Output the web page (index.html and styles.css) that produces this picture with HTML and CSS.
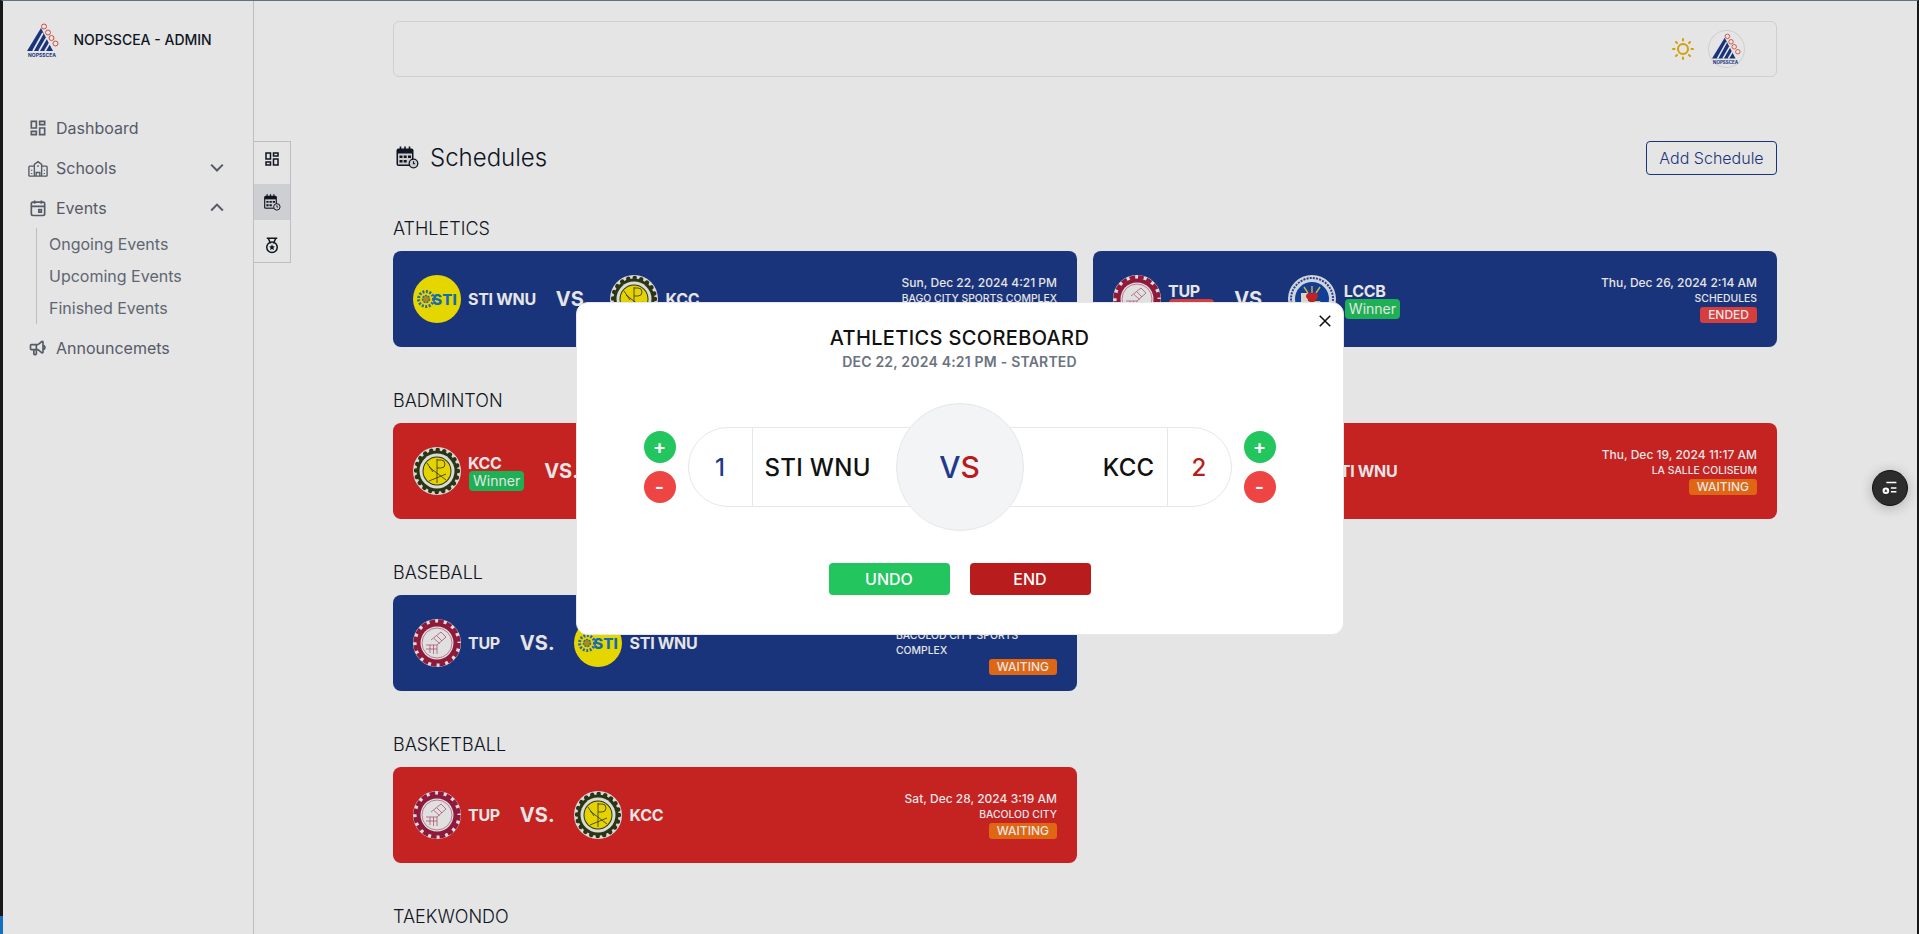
FILE: index.html
```html
<!DOCTYPE html>
<html lang="en">

<head>
    <meta charset="UTF-8">
    <meta name="viewport" content="width=device-width, initial-scale=1.0">
    <title>NOPSSCEA - Admin Schedules</title>
    <link rel="stylesheet" href="styles.css">
</head>

<body>
    <svg class="svg-defs" aria-hidden="true">
        <symbol id="mark-nopsscea" viewBox="0 0 32 36">
            <polygon points="0,28 14,5 26,28" fill="#1e3a8a" />
            <path d="M6 28 L16 10 M12 28 L19.5 15 M18 28 L23 19.5" stroke="#fff" stroke-width="1.7" fill="none" />
            <g fill="#fff" stroke="#e2574c" stroke-width="1">
                <circle cx="17" cy="3.5" r="2.5" />
                <circle cx="21" cy="9.5" r="2.5" />
                <circle cx="24.5" cy="15" r="2.5" />
                <circle cx="28.5" cy="20.5" r="2.5" />
            </g>
        </symbol>

        <symbol id="mark-sti" viewBox="0 0 48 48">
            <circle cx="24" cy="24" r="24" fill="#ffef00" />
            <circle cx="13" cy="24" r="7.5" fill="none" stroke="#2f77b5" stroke-width="3" stroke-dasharray="2 1.5" />
            <circle cx="13" cy="24" r="3.5" fill="#c99a1a" stroke="#2f77b5" stroke-width="1.5" stroke-dasharray="2 1" />
        </symbol>

        <symbol id="logo-kcc" viewBox="0 0 48 48">
            <circle cx="24" cy="24" r="24" fill="#f2f2f2" />
            <circle cx="24" cy="24" r="20.5" fill="#2f3c16" />
            <circle cx="24" cy="24" r="21" fill="none" stroke="#2f3c16" stroke-width="4.4" stroke-linecap="round" stroke-dasharray=".1 6.5" />
            <circle cx="24" cy="24" r="17.5" fill="#f4f4ee" />
            <circle cx="24" cy="24" r="14.5" fill="#2f3c16" />
            <circle cx="24" cy="24" r="13.5" fill="#ffeb00" />
            <path d="M24 12 V36 M24 13 h4 a4 4 0 0 1 0 8 h-4 M16 20 L33 33 M33 27 L16 34 M14 16 L20 25" stroke="#333" stroke-width=".8" fill="none" />
        </symbol>

        <symbol id="logo-tup" viewBox="0 0 48 48">
            <circle cx="24" cy="24" r="24" fill="#f5f5f5" />
            <circle cx="24" cy="24" r="20.5" fill="#a01c42" />
            <circle cx="24" cy="24" r="21.8" fill="none" stroke="#a01c42" stroke-width="3.8" stroke-dasharray="5.6 3" />
            <circle cx="24" cy="24" r="16.5" fill="#fafafa" />
            <circle cx="24" cy="24" r="15" fill="none" stroke="#a01c42" stroke-width=".5" />
            <path d="M13 26 h11 v9 M17 26 v8 M20.5 26 v9 M13 30 h11 M24 26 L33 18 L28 13 L18 21 M24 17 L29 22 M21 19.5 L26.5 24.5" stroke="#b8496a" stroke-width=".7" fill="none" />
        </symbol>

        <symbol id="logo-lccb" viewBox="0 0 48 48">
            <circle cx="24" cy="24" r="24" fill="#e8edf6" />
            <circle cx="24" cy="24" r="21" fill="none" stroke="#2a4a9c" stroke-width="2" stroke-dasharray="2 1.2" />
            <circle cx="24" cy="24" r="17" fill="#1546a8" />
            <path d="M12 33 h24 l-4 -7 h-16 z" fill="#f0d98a" />
            <rect x="13" y="18" width="7" height="9" fill="#f3f0e0" />
            <path d="M24 30 L18 22 a3.5 3.5 0 0 1 6 -3 a3.5 3.5 0 0 1 6 3 z" fill="#d9262a" />
            <path d="M24 18 V11 M20 18 L16 12 M28 18 L32 12" stroke="#f4c430" stroke-width="1.4" />
        </symbol>

        <symbol id="icon-calendar-clock" viewBox="0 0 24 24">
            <rect x="1.5" y="3.5" width="17" height="17.5" rx="2" fill="currentColor" />
            <path d="M5.5 1.5 v4 M10 1.5 v4 M14.5 1.5 v4" stroke="currentColor" stroke-width="1.6" />
            <rect x="3" y="8.5" width="14" height="11" fill="#e5e5e5" />
            <path d="M4.5 10.5 h3 v2.5 h-3 z M8.7 10.5 h3 v2.5 h-3 z M13 10.5 h3 v2.5 h-3 z M4.5 15 h3 v2.5 h-3 z M8.7 15 h3 v2.5 h-3 z" fill="currentColor" />
            <circle cx="18.5" cy="18.5" r="4.3" fill="#e5e5e5" stroke="currentColor" stroke-width="1.3" />
            <path d="M18.5 16.2 v2.6 h1.6" stroke="currentColor" stroke-width="1.1" fill="none" />
        </symbol>

        <symbol id="icon-dashboard" viewBox="0 0 24 24">
            <path d="M4 4h6v8H4z M4 16h6v4H4z M14 12h6v8h-6z M14 4h6v4h-6z" fill="none" stroke="currentColor" stroke-width="2" />
        </symbol>
    </svg>

    <div class="frame">
        <aside class="sidebar">
            <div class="brand">
                <svg class="brand-logo" viewBox="0 0 32 36">
                    <use href="#mark-nopsscea" width="32" height="36" />
                    <text class="logo-caption" x="15" y="34" text-anchor="middle">NOPSSCEA</text>
                </svg>
                <span class="brand-name">NOPSSCEA - ADMIN</span>
            </div>

            <nav class="nav">
                <a class="nav-item">
                    <svg class="nav-icon"><use href="#icon-dashboard" /></svg>
                    <span>Dashboard</span>
                </a>
                <a class="nav-item">
                    <svg class="nav-icon" viewBox="1 1 22 22" fill="none" stroke="currentColor" stroke-width="1.5">
                        <path d="M2 21 V11 a1 1 0 0 1 1-1 h5 M22 21 V11 a1 1 0 0 0-1-1 h-5 M8 21 V8 l4-3 4 3 v13 M2 21 h20 M10 21 v-4 h4 v4 M12 9 v2 M5 14 v1 M5 17.5 v1 M19 14 v1 M19 17.5 v1" />
                    </svg>
                    <span>Schools</span>
                    <svg class="nav-chevron" viewBox="0 0 24 24" fill="none" stroke="currentColor" stroke-width="2.4"><path d="M5 8 l7 7 7-7" /></svg>
                </a>
                <a class="nav-item">
                    <svg class="nav-icon" viewBox="0 0 24 24" fill="none" stroke="currentColor" stroke-width="2">
                        <path d="M6 5h12a2 2 0 0 1 2 2v12a2 2 0 0 1-2 2H6a2 2 0 0 1-2-2V7a2 2 0 0 1 2-2 M16 3v4 M8 3v4 M4 10h16" />
                        <rect x="13" y="14" width="3" height="3" />
                    </svg>
                    <span>Events</span>
                    <svg class="nav-chevron" viewBox="0 0 24 24" fill="none" stroke="currentColor" stroke-width="2.4"><path d="M5 15 l7-7 7 7" /></svg>
                </a>
                <div class="subnav">
                    <a class="subnav-item">Ongoing Events</a>
                    <a class="subnav-item">Upcoming Events</a>
                    <a class="subnav-item">Finished Events</a>
                </div>
                <a class="nav-item">
                    <svg class="nav-icon" viewBox="0 0 24 24" fill="none" stroke="currentColor" stroke-width="2">
                        <path d="M19 9a3 3 0 0 1 0 5 M10 8v11a1 1 0 0 1-1 1H8a1 1 0 0 1-1-1v-5 M12 8l4.6-3.8A1 1 0 0 1 18 5v12a1 1 0 0 1-1.4.8L12 14H4a1 1 0 0 1-1-1V9a1 1 0 0 1 1-1h8" />
                    </svg>
                    <span>Announcemets</span>
                </a>
            </nav>
        </aside>

        <div class="rail">
            <a class="rail-item"><svg class="rail-icon"><use href="#icon-dashboard" /></svg></a>
            <a class="rail-item rail-active"><svg class="rail-icon"><use href="#icon-calendar-clock" /></svg></a>
            <a class="rail-item">
                <svg class="rail-icon" viewBox="0 0 24 24" fill="none" stroke="currentColor" stroke-width="2">
                    <path d="M5 3 h14 M7 3 l3 7 M17 3 l-3 7" />
                    <circle cx="12" cy="15" r="7" />
                    <path d="M12 11 l1.2 2.6 2.8.3-2.1 1.9.6 2.8-2.5-1.4-2.5 1.4.6-2.8-2.1-1.9 2.8-.3 z" fill="currentColor" stroke="none" />
                </svg>
            </a>
        </div>

        <main class="main">
            <header class="topbar">
                <svg class="sun" viewBox="0 0 24 24" fill="none" stroke="currentColor" stroke-width="2" stroke-linecap="round">
                    <circle cx="12" cy="12" r="5" />
                    <path d="M12 2 v1.5 M12 20.5 V22 M2 12 h1.5 M20.5 12 H22 M5 5 l1 1 M18 18 l1 1 M5 19 l1-1 M18 6 l1-1" />
                </svg>
                <div class="avatar">
                    <svg class="avatar-logo" viewBox="0 0 32 36">
                        <use href="#mark-nopsscea" width="32" height="36" />
                        <text class="logo-caption" x="15" y="34" text-anchor="middle">NOPSSCEA</text>
                    </svg>
                </div>
            </header>

            <div class="page-head">
                <h1 class="page-title">
                    <svg class="page-icon"><use href="#icon-calendar-clock" /></svg>
                    Schedules
                </h1>
                <button class="btn-outline">Add Schedule</button>
            </div>

            <section class="sport">
                <h2 class="sport-name">ATHLETICS</h2>
                <div class="card-grid">
                    <article class="card card-blue">
                        <div class="match">
                            <svg class="team-logo" viewBox="0 0 48 48">
                                <use href="#mark-sti" width="48" height="48" />
                                <text class="sti-text" x="31.5" y="29.5" text-anchor="middle">STI</text>
                            </svg>
                            <div class="team"><span class="team-name">STI WNU</span></div>
                            <span class="versus">VS.</span>
                            <svg class="team-logo"><use href="#logo-kcc" /></svg>
                            <div class="team"><span class="team-name">KCC</span></div>
                        </div>
                        <div class="info">
                            <span class="info-date">Sun, Dec 22, 2024 4:21 PM</span>
                            <span class="info-venue">BAGO CITY SPORTS COMPLEX</span>
                            <span class="status status-ongoing">ONGOING</span>
                        </div>
                    </article>
                    <article class="card card-blue">
                        <div class="match">
                            <svg class="team-logo"><use href="#logo-tup" /></svg>
                            <div class="team">
                                <span class="team-name">TUP</span>
                                <span class="result result-loser">Loser</span>
                            </div>
                            <span class="versus">VS.</span>
                            <svg class="team-logo"><use href="#logo-lccb" /></svg>
                            <div class="team">
                                <span class="team-name">LCCB</span>
                                <span class="result result-winner">Winner</span>
                            </div>
                        </div>
                        <div class="info">
                            <span class="info-date">Thu, Dec 26, 2024 2:14 AM</span>
                            <span class="info-venue">SCHEDULES</span>
                            <span class="status status-ended">ENDED</span>
                        </div>
                    </article>
                </div>
            </section>

            <section class="sport">
                <h2 class="sport-name">BADMINTON</h2>
                <div class="card-grid">
                    <article class="card card-red">
                        <div class="match">
                            <svg class="team-logo"><use href="#logo-kcc" /></svg>
                            <div class="team">
                                <span class="team-name">KCC</span>
                                <span class="result result-winner">Winner</span>
                            </div>
                            <span class="versus">VS.</span>
                        </div>
                    </article>
                    <article class="card card-red">
                        <div class="match">
                            <svg class="team-logo"><use href="#logo-tup" /></svg>
                            <div class="team"><span class="team-name">TUP</span></div>
                            <span class="versus">VS.</span>
                            <svg class="team-logo" viewBox="0 0 48 48">
                                <use href="#mark-sti" width="48" height="48" />
                            </svg>
                            <div class="team"><span class="team-name">STI WNU</span></div>
                        </div>
                        <div class="info">
                            <span class="info-date">Thu, Dec 19, 2024 11:17 AM</span>
                            <span class="info-venue">LA SALLE COLISEUM</span>
                            <span class="status status-waiting">WAITING</span>
                        </div>
                    </article>
                </div>
            </section>

            <section class="sport">
                <h2 class="sport-name">BASEBALL</h2>
                <div class="card-grid">
                    <article class="card card-blue">
                        <div class="match">
                            <svg class="team-logo"><use href="#logo-tup" /></svg>
                            <div class="team"><span class="team-name">TUP</span></div>
                            <span class="versus">VS.</span>
                            <svg class="team-logo" viewBox="0 0 48 48">
                                <use href="#mark-sti" width="48" height="48" />
                                <text class="sti-text" x="31.5" y="29.5" text-anchor="middle">STI</text>
                            </svg>
                            <div class="team"><span class="team-name">STI WNU</span></div>
                        </div>
                        <div class="info info-narrow">
                            <span class="info-date">Sat, Dec 21, 2024 9:00 AM</span>
                            <span class="info-venue">BACOLOD CITY SPORTS COMPLEX</span>
                            <span class="status status-waiting">WAITING</span>
                        </div>
                    </article>
                </div>
            </section>

            <section class="sport">
                <h2 class="sport-name">BASKETBALL</h2>
                <div class="card-grid">
                    <article class="card card-red">
                        <div class="match">
                            <svg class="team-logo"><use href="#logo-tup" /></svg>
                            <div class="team"><span class="team-name">TUP</span></div>
                            <span class="versus">VS.</span>
                            <svg class="team-logo"><use href="#logo-kcc" /></svg>
                            <div class="team"><span class="team-name">KCC</span></div>
                        </div>
                        <div class="info">
                            <span class="info-date">Sat, Dec 28, 2024 3:19 AM</span>
                            <span class="info-venue">BACOLOD CITY</span>
                            <span class="status status-waiting">WAITING</span>
                        </div>
                    </article>
                </div>
            </section>

            <section class="sport">
                <h2 class="sport-name">TAEKWONDO</h2>
            </section>
        </main>
    </div>

    <div class="overlay">
        <div class="modal">
            <button class="modal-close" aria-label="Close">
                <svg viewBox="0 0 16 16" fill="none" stroke="currentColor" stroke-width="1.8"><path d="M2 2 L14 14 M14 2 L2 14" /></svg>
            </button>
            <h3 class="modal-title">ATHLETICS SCOREBOARD</h3>
            <p class="modal-sub">DEC 22, 2024 4:21 PM - STARTED</p>

            <div class="scoreboard">
                <div class="score-btns">
                    <button class="score-btn score-add">+</button>
                    <button class="score-btn score-sub">-</button>
                </div>
                <div class="pill">
                    <span class="pill-score pill-score-home">1</span>
                    <span class="pill-name">STI WNU</span>
                    <span class="pill-name pill-name-away">KCC</span>
                    <span class="pill-score pill-score-away">2</span>
                    <div class="pill-vs"><span class="vs-v">V</span><span class="vs-s">S</span></div>
                </div>
                <div class="score-btns">
                    <button class="score-btn score-add">+</button>
                    <button class="score-btn score-sub">-</button>
                </div>
            </div>

            <div class="modal-actions">
                <button class="action action-undo">UNDO</button>
                <button class="action action-end">END</button>
            </div>
        </div>
    </div>

    <button class="float-btn" aria-label="Open panel">
        <svg viewBox="0 0 24 24" fill="none" stroke="#fff" stroke-width="1.6">
            <path d="M8 6 h11 M13 12 h6 M13 16 h6" />
            <circle cx="7.5" cy="15" r="3.6" fill="#fff" stroke="none" />
            <path d="M7.5 13.2 l1.7 3 h-3.4 z" fill="#2c2c2c" stroke="none" />
        </svg>
    </button>
    <div class="taskbar-edge"></div>
</body>

</html>
```

FILE: styles.css
```css
* {
    box-sizing: border-box;
}

html,
body {
    height: 100%;
    margin: 0;
    overflow: hidden;
}

body {
    font-family: Inter, "Liberation Sans", sans-serif;
    color: #111827;
    background-color: #fff;
}

h1,
h2,
h3,
p {
    margin: 0;
}

button {
    font-family: inherit;
    cursor: pointer;
}

.svg-defs {
    position: absolute;
    width: 0;
    height: 0;
}

.frame {
    display: flex;
    height: 100%;
    border-top: 1px solid #6c8090;
    border-left: 3px solid #1c1c1c;
    border-right: 2px solid #1c1c1c;
}

/* sidebar */
.sidebar {
    flex: 0 0 251px;
    border-right: 1px solid #d1d5db;
    padding-top: 22px;
}

.brand {
    display: flex;
    align-items: center;
    gap: 14.5px;
    height: 36px;
    padding-left: 24px;
}

.brand-logo {
    width: 32px;
    height: 36px;
}

.logo-caption {
    font-size: 5px;
    font-weight: 700;
    fill: #1e3a8a;
}

.brand-name {
    margin-bottom: 4px;
    font-size: 14px;
    font-weight: 500;
    color: #111827;
}

.nav {
    margin-top: 49px;
    padding: 0 26px 0 25px;
    color: #5f6673;
}

.nav-item {
    display: flex;
    align-items: center;
    gap: 8px;
    height: 40px;
    font-size: 16px;
}

.nav-icon {
    flex: none;
    width: 20px;
    height: 20px;
}

.nav-chevron {
    width: 20px;
    height: 20px;
    margin-left: auto;
}

.subnav {
    margin: 0 0 4px 8px;
    padding-left: 12px;
    border-left: 1px solid #d1d5db;
    color: #6b7280;
}

.subnav-item {
    display: flex;
    align-items: center;
    height: 32px;
    font-size: 16px;
}

/* icon rail */
.rail {
    display: flex;
    flex-direction: column;
    gap: 8px;
    flex: none;
    align-self: flex-start;
    width: 37px;
    margin-top: 140px;
    border: 1px solid #d1d5db;
    border-left: 0;
}

.rail-item {
    display: flex;
    align-items: center;
    justify-content: center;
    height: 34px;
    color: #111827;
}

.rail-active {
    height: 36px;
    background-color: #e5e7eb;
}

.rail-icon {
    width: 18px;
    height: 18px;
}

/* main column */
.main {
    flex: 1;
    min-width: 0;
    padding: 20px 140px 0 102px;
}

.topbar {
    display: flex;
    align-items: center;
    justify-content: flex-end;
    gap: 13px;
    height: 56px;
    padding-right: 31px;
    border: 1px solid #e5e7eb;
    border-radius: 6px;
}

.sun {
    width: 24px;
    height: 24px;
    color: #eab308;
}

.avatar {
    display: flex;
    align-items: center;
    justify-content: center;
    width: 37px;
    height: 38px;
    border: 1px solid #e5e7eb;
    border-radius: 50%;
    background-color: #fff;
}

.avatar-logo {
    width: 29px;
    height: 33px;
}

.page-head {
    display: flex;
    align-items: center;
    justify-content: space-between;
    margin-top: 64px;
    height: 34px;
}

.page-title {
    display: flex;
    align-items: center;
    gap: 11px;
    padding: 0 0 2px 2px;
    font-size: 24px;
    font-weight: 350;
}

.page-icon {
    width: 24px;
    height: 24px;
}

.btn-outline {
    width: 131px;
    height: 34px;
    font-size: 16px;
    font-weight: 350;
    color: #1e3a8a;
    background: transparent;
    border: 1px solid #1e3a8a;
    border-radius: 4px;
}

.sport {
    margin-top: 40px;
}

.sport-name {
    font-size: 18px;
    line-height: 28px;
    font-weight: 350;
    color: #111827;
}

.card-grid {
    display: grid;
    grid-template-columns: 1fr 1fr;
    gap: 16px;
    margin-top: 8px;
}

.card {
    display: flex;
    align-items: center;
    justify-content: space-between;
    height: 96px;
    padding: 0 20px;
    border-radius: 8px;
    color: #fff;
}

.card-blue {
    background-color: #1e3a8a;
}

.card-red {
    background-color: #dc2626;
}

.match {
    display: flex;
    align-items: center;
}

.team-logo {
    flex: none;
    width: 48px;
    height: 48px;
}

.sti-text {
    font-size: 15px;
    font-weight: 800;
    fill: #1479c4;
}

.team {
    display: flex;
    flex-direction: column;
    align-items: flex-start;
    margin-left: 7px;
}

.versus + .team-logo + .team {
    margin-left: 8px;
}

.team:has(.result) {
    padding-top: 4px;
}

.team-name {
    font-size: 16px;
    line-height: 16px;
    font-weight: 700;
    letter-spacing: -0.3px;
}

.result {
    margin-left: 1px;
    padding: 0 4px;
    font-size: 14px;
    line-height: 20px;
    border-radius: 4px;
}

.result-winner {
    background-color: #22c55e;
}

.result-loser {
    background-color: #ef4444;
}

.versus {
    margin: 0 19px 0 20px;
    font-size: 20px;
    font-weight: 700;
}

.info {
    display: flex;
    flex-direction: column;
    align-items: flex-end;
    text-align: right;
}

.info-date {
    font-size: 12px;
    line-height: 16px;
    font-weight: 500;
}

.info-venue {
    font-size: 10.4px;
    line-height: 15px;
    font-weight: 500;
}

.info-narrow {
    width: 161px;
}

.info-narrow .info-venue {
    width: 100%;
    padding-right: 30px;
    text-align: left;
}

.status {
    margin-top: 1px;
    padding: 0 8px;
    font-size: 12px;
    line-height: 16px;
    font-weight: 500;
    border-radius: 3px;
}

.status-waiting {
    background-color: #f97316;
}

.status-ended {
    background-color: #ef4444;
}

.status-ongoing {
    background-color: #22c55e;
}

/* scoreboard dialog */
.overlay {
    position: fixed;
    inset: 0;
    z-index: 10;
    display: flex;
    align-items: center;
    justify-content: center;
    padding-top: 3px;
    background-color: rgba(0, 0, 0, 0.1);
}

.modal {
    position: relative;
    width: 768px;
    padding: 21px 0 39px;
    text-align: center;
    color: #111;
    background-color: #fff;
    border: 1px solid #e5e7eb;
    border-radius: 12px;
}

.modal-close {
    position: absolute;
    top: 11px;
    right: 11px;
    width: 14px;
    height: 14px;
    padding: 0;
    color: #111;
    background: none;
    border: 0;
}

.modal-title {
    font-size: 20px;
    line-height: 28px;
    font-weight: 500;
    letter-spacing: 0.35px;
}

.modal-sub {
    font-size: 14px;
    line-height: 20px;
    font-weight: 600;
    letter-spacing: 0.2px;
    color: #6b7280;
}

.scoreboard {
    display: flex;
    align-items: center;
    justify-content: center;
    gap: 12px;
    margin-top: 55px;
}

.score-btns {
    display: flex;
    flex-direction: column;
    gap: 8px;
}

.score-btn {
    width: 32px;
    height: 32px;
    padding: 0;
    font-size: 20px;
    font-weight: 600;
    line-height: 1;
    color: #fff;
    border: 0;
    border-radius: 50%;
}

.score-add {
    background-color: #22c55e;
}

.score-sub {
    background-color: #ef4444;
}

.pill {
    position: relative;
    display: flex;
    align-items: center;
    width: 544px;
    height: 80px;
    font-size: 24px;
    font-weight: 500;
    border: 1px solid #e5e7eb;
    border-radius: 40px;
}

.pill-score {
    display: flex;
    align-items: center;
    justify-content: center;
    flex: none;
    width: 64px;
    height: 100%;
}

.pill-score-home {
    color: #1e3a8a;
    border-right: 1px solid #e5e7eb;
}

.pill-score-away {
    color: #b91c1c;
    border-left: 1px solid #e5e7eb;
}

.pill-name {
    flex: 1;
    padding: 0 12px;
    text-align: left;
    letter-spacing: 0.3px;
}

.pill-name-away {
    text-align: right;
}

.pill-vs {
    position: absolute;
    top: 50%;
    left: 50%;
    width: 128px;
    height: 128px;
    font-size: 30px;
    line-height: 126px;
    transform: translate(-50%, -50%);
    background-color: #f3f4f6;
    border: 1px solid #e5e7eb;
    border-radius: 50%;
}

.vs-v {
    color: #1e3a8a;
}

.vs-s {
    color: #b91c1c;
}

.modal-actions {
    display: flex;
    justify-content: center;
    gap: 20px;
    margin-top: 56px;
}

.action {
    width: 121px;
    height: 32px;
    font-size: 16px;
    font-weight: 500;
    color: #fff;
    border: 0;
    border-radius: 4px;
}

.action-undo {
    background-color: #22c55e;
}

.action-end {
    background-color: #b91c1c;
}

.float-btn {
    position: fixed;
    top: 470px;
    right: 11px;
    z-index: 20;
    display: flex;
    align-items: center;
    justify-content: center;
    width: 36px;
    height: 36px;
    padding: 6px;
    background-color: #2c2c2c;
    border: 1px solid #111;
    border-radius: 50%;
    box-shadow: 0 2px 14px rgba(0, 0, 0, 0.25);
}

.taskbar-edge {
    position: fixed;
    left: 0;
    bottom: 0;
    z-index: 20;
    width: 3px;
    height: 18px;
    background-color: #1170c0;
}
```
